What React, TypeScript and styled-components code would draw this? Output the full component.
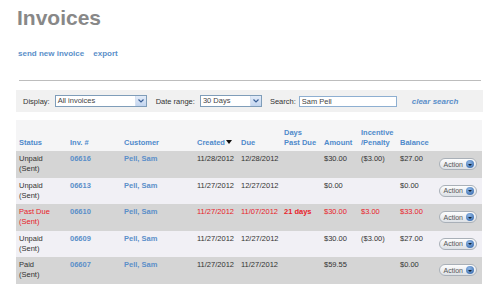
import styled, { createGlobalStyle, css } from 'styled-components';

const GlobalStyle = createGlobalStyle`
  html, body {
    margin: 0;
    padding: 0;
    background: #fff;
    font-family: "Liberation Sans", Arial, sans-serif;
  }
`;

type Invoice = {
  status: string;
  number: string;
  customer: string;
  created: string;
  due: string;
  pastDue: string;
  amount: string;
  penalty: string;
  balance: string;
  overdue?: boolean;
};

const invoices: Invoice[] = [
  { status: 'Unpaid', number: '06616', customer: 'Pell, Sam', created: '11/28/2012', due: '12/28/2012', pastDue: '', amount: '$30.00', penalty: '($3.00)', balance: '$27.00' },
  { status: 'Unpaid', number: '06613', customer: 'Pell, Sam', created: '11/27/2012', due: '12/27/2012', pastDue: '', amount: '$0.00', penalty: '', balance: '$0.00' },
  { status: 'Past Due', number: '06610', customer: 'Pell, Sam', created: '11/27/2012', due: '11/07/2012', pastDue: '21 days', amount: '$30.00', penalty: '$3.00', balance: '$33.00', overdue: true },
  { status: 'Unpaid', number: '06609', customer: 'Pell, Sam', created: '11/27/2012', due: '12/27/2012', pastDue: '', amount: '$30.00', penalty: '($3.00)', balance: '$27.00' },
  { status: 'Paid', number: '06607', customer: 'Pell, Sam', created: '11/27/2012', due: '11/27/2012', pastDue: '', amount: '$59.55', penalty: '', balance: '$0.00' },
];

const columns = [51, 54, 73, 44, 43, 40, 37, 39, 39, 46];

const LINK = '#5b8fc9';
const RED = '#e8222a';

const Page = styled.div`
  width: 467px;
  padding: 6px 0 0 16px;
`;

const Title = styled.h1`
  margin: 0 0 0 1px;
  font-size: 21px;
  line-height: 24px;
  font-weight: bold;
  color: #888;
`;

const Actions = styled.div`
  display: flex;
  gap: 9px;
  margin: 19px 0 0 2px;
`;

const TopLink = styled.a`
  font-size: 8px;
  line-height: 10px;
  font-weight: bold;
  color: ${LINK};
  text-decoration: none;
`;

const Rule = styled.hr`
  margin: 21px 2px 0 3px;
  border: 0;
  border-top: 1px solid #bdbdbd;
`;

const FilterBar = styled.div`
  display: flex;
  align-items: center;
  height: 22px;
  margin-top: 9px;
  padding-left: 7px;
  background: #f1f1f1;
  font-size: 7.5px;
  color: #333;
`;

const Label = styled.span<{ $gap: number }>`
  margin-right: ${p => p.$gap}px;
`;

const FakeSelect = styled.div<{ $width: number; $gap: number }>`
  display: flex;
  align-items: stretch;
  width: ${p => p.$width}px;
  height: 10px;
  margin-right: ${p => p.$gap}px;
  border: 1px solid #7f9db9;
  background: #fff;
  box-sizing: content-box;
`;

const SelectText = styled.span`
  flex: 1;
  padding-left: 2px;
  line-height: 10px;
  font-size: 7.5px;
  color: #444;
`;

const SelectArrow = styled.span`
  display: flex;
  align-items: center;
  justify-content: center;
  width: 10px;
  background: linear-gradient(#e3ecf9, #c3d5ef);
  border-left: 1px solid #d5e0f0;
`;

const SearchInput = styled.input`
  width: 92px;
  height: 9px;
  margin-right: 15px;
  padding: 0 2px;
  border: 1px solid #8eafd1;
  font-family: inherit;
  font-size: 7.5px;
  color: #444;
  outline: none;
`;

const ClearLink = styled.a`
  font-size: 8px;
  font-weight: bold;
  font-style: italic;
  color: ${LINK};
  text-decoration: none;
`;

const Table = styled.table`
  width: 466px;
  margin-top: 8px;
  border-collapse: collapse;
  table-layout: fixed;
  font-size: 7.5px;
  line-height: 10px;
`;

const HeadRow = styled.tr`
  height: 31px;
  background: #f5f5f6;
`;

const Th = styled.th`
  padding: 0 0 3px 3px;
  text-align: left;
  vertical-align: bottom;
  font-weight: bold;
  color: #4f8acb;
`;

const SortArrow = styled.span`
  display: inline-block;
  margin-left: 1px;
  vertical-align: 1px;
  border-left: 3px solid transparent;
  border-right: 3px solid transparent;
  border-top: 4px solid #111;
`;

const Row = styled.tr<{ $odd: boolean }>`
  height: 26.5px;
  background: ${p => (p.$odd ? '#d5d5d5' : '#f1f0f5')};
`;

const Td = styled.td<{ $red?: boolean; $link?: boolean; $bold?: boolean }>`
  padding: 3px 0 0 3px;
  vertical-align: top;
  color: #333;
  ${p => p.$link && css`color: ${LINK}; font-weight: bold;`}
  ${p => p.$red && css`color: ${RED};`}
  ${p => p.$bold && css`font-weight: bold;`}
`;

const ActionButton = styled.button`
  display: flex;
  align-items: center;
  justify-content: flex-end;
  gap: 3px;
  width: 38px;
  height: 12px;
  margin-top: 4px;
  padding: 0 2px 0 0;
  border: 1px solid #a9b0b8;
  border-radius: 7px;
  background: linear-gradient(#fdfdfd, #dde1e6);
  font-family: inherit;
  font-size: 7px;
  color: #555;
  box-sizing: border-box;
`;

const ActionDot = styled.span`
  display: flex;
  align-items: center;
  justify-content: center;
  width: 8px;
  height: 8px;
  border-radius: 50%;
  background: radial-gradient(circle at 40% 30%, #8fb6e4, #2d62a8);
  &::after {
    content: '';
    border-left: 2px solid transparent;
    border-right: 2px solid transparent;
    border-top: 2.5px solid #123;
    margin-top: 1px;
  }
`;

const ChevronDown = () => (
  <svg width="6" height="4" viewBox="0 0 6 4">
    <path d="M0.5 0.5 L3 3 L5.5 0.5" fill="none" stroke="#3a5f96" strokeWidth="1.2" />
  </svg>
);

export default function App() {
  return (
    <Page>
      <GlobalStyle />
      <Title>Invoices</Title>
      <Actions>
        <TopLink href="#">send new invoice</TopLink>
        <TopLink href="#">export</TopLink>
      </Actions>
      <Rule />
      <FilterBar>
        <Label $gap={5}>Display:</Label>
        <FakeSelect $width={90} $gap={9}>
          <SelectText>All invoices</SelectText>
          <SelectArrow><ChevronDown /></SelectArrow>
        </FakeSelect>
        <Label $gap={5}>Date range:</Label>
        <FakeSelect $width={60} $gap={8}>
          <SelectText>30 Days</SelectText>
          <SelectArrow><ChevronDown /></SelectArrow>
        </FakeSelect>
        <Label $gap={3}>Search:</Label>
        <SearchInput readOnly value="Sam Pell" />
        <ClearLink href="#">clear search</ClearLink>
      </FilterBar>
      <Table>
        <colgroup>
          {columns.map((w, i) => (
            <col key={i} style={{ width: w }} />
          ))}
        </colgroup>
        <thead>
          <HeadRow>
            <Th>Status</Th>
            <Th>Inv. #</Th>
            <Th>Customer</Th>
            <Th>Created<SortArrow /></Th>
            <Th>Due</Th>
            <Th>Days<br />Past Due</Th>
            <Th>Amount</Th>
            <Th>Incentive<br />/Penalty</Th>
            <Th>Balance</Th>
            <Th />
          </HeadRow>
        </thead>
        <tbody>
          {invoices.map((inv, i) => (
            <Row key={inv.number} $odd={i % 2 === 0}>
              <Td $red={inv.overdue}>{inv.status}<br />(Sent)</Td>
              <Td $link>{inv.number}</Td>
              <Td $link>{inv.customer}</Td>
              <Td $red={inv.overdue}>{inv.created}</Td>
              <Td $red={inv.overdue}>{inv.due}</Td>
              <Td $red={inv.overdue} $bold>{inv.pastDue}</Td>
              <Td $red={inv.overdue}>{inv.amount}</Td>
              <Td $red={inv.overdue}>{inv.penalty}</Td>
              <Td $red={inv.overdue}>{inv.balance}</Td>
              <Td>
                <ActionButton type="button">
                  Action
                  <ActionDot />
                </ActionButton>
              </Td>
            </Row>
          ))}
        </tbody>
      </Table>
    </Page>
  );
}
